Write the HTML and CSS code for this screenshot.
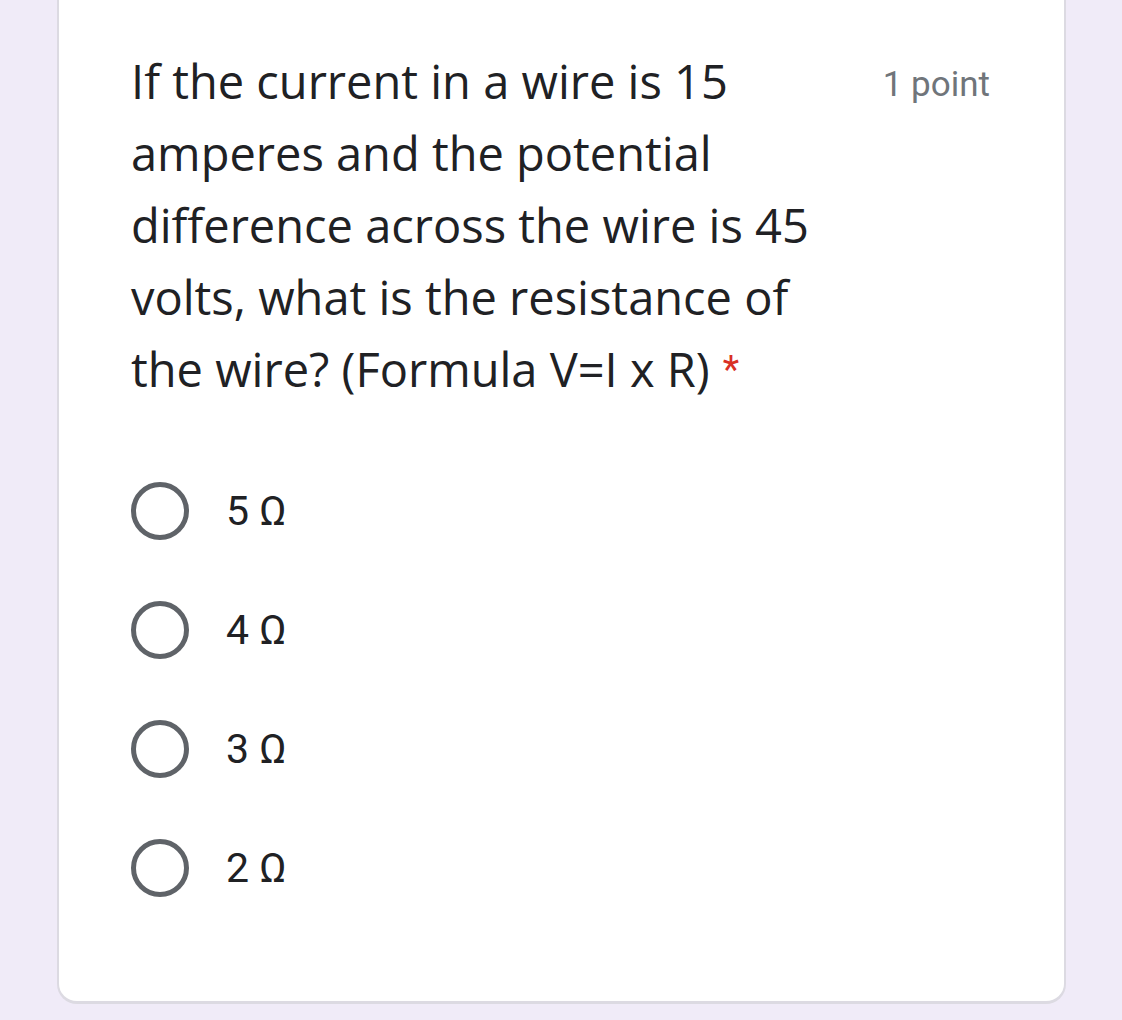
FILE: index.html
```html
<!DOCTYPE html>
<html lang="en">
<head>
<meta charset="utf-8">
<title>Question</title>
<link rel="stylesheet" href="styles.css">
</head>
<body>
<div class="page">
  <div class="card">
    <div class="header">
      <div class="question">If the current in a wire is 15 amperes and the potential difference across the wire is 45 volts, what is the resistance of the wire? (Formula V=I x R) <span class="required">*</span></div>
      <div class="points">1 point</div>
    </div>
    <div class="options">
      <label class="option"><span class="radio"></span><span class="label">5 Ω</span></label>
      <label class="option"><span class="radio"></span><span class="label">4 Ω</span></label>
      <label class="option"><span class="radio"></span><span class="label">3 Ω</span></label>
      <label class="option"><span class="radio"></span><span class="label">2 Ω</span></label>
    </div>
  </div>
</div>
</body>
</html>
```

FILE: styles.css
```css
html, body {
  margin: 0;
  padding: 0;
  background: #f0ebf8;
}
.page {
  padding: 0 56px 16px 57px;
  height: 1020px;
  box-sizing: border-box;
  display: flex;
  flex-direction: column;
}
.card {
  flex: 1;
  background: #ffffff;
  border: 2px solid #dcdae2;
  border-top: none;
  border-bottom-width: 3px;
  border-radius: 0 0 20px 20px;
  padding: 45px 74px 0 72px;
}
.header {
  display: flex;
  justify-content: space-between;
  align-items: flex-start;
}
.question {
  width: 700px;
  font-family: "Open Sans", sans-serif;
  font-size: 47px;
  line-height: 72px;
  color: #202124;
}
.required {
  font-family: Roboto, sans-serif;
  font-size: 38px;
  line-height: 1;
  vertical-align: 4px;
  margin-left: 1px;
  color: #d93025;
}
.points {
  font-family: Roboto, sans-serif;
  font-size: 35px;
  line-height: 72px;
  color: #70757a;
  padding-top: 4px;
}
.options {
  display: flex;
  flex-direction: column;
  padding-top: 46px;
}
.option {
  display: flex;
  align-items: center;
  height: 119px;
}
.radio {
  width: 48px;
  height: 48px;
  border: 5px solid #5f6368;
  border-radius: 50%;
  flex: none;
}
.label {
  margin-left: 37px;
  font-family: Roboto, sans-serif;
  font-size: 41px;
  color: #202124;
}
```
